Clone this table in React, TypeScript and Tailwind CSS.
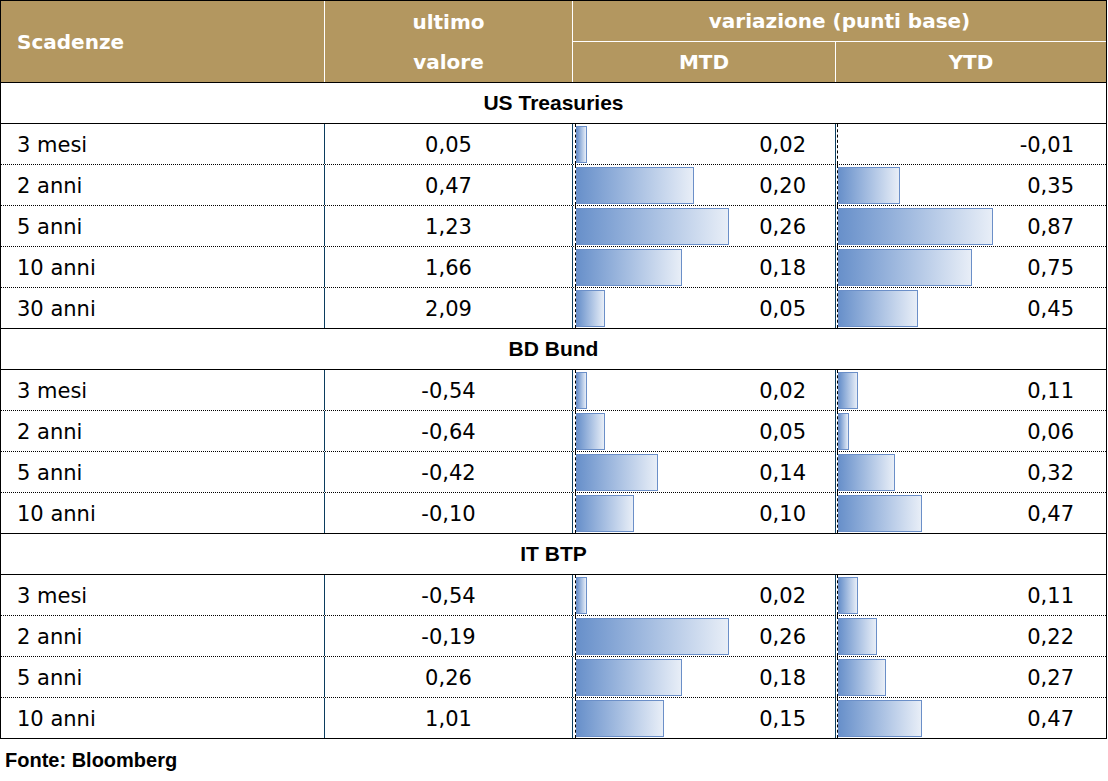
import React from "react";

type Row = { label: string; last: string; mtd: number; ytd: number };
type Section = { title: string; rows: Row[] };

const sections: Section[] = [
  {
    title: "US Treasuries",
    rows: [
      { label: "3 mesi", last: "0,05", mtd: 0.02, ytd: -0.01 },
      { label: "2 anni", last: "0,47", mtd: 0.2, ytd: 0.35 },
      { label: "5 anni", last: "1,23", mtd: 0.26, ytd: 0.87 },
      { label: "10 anni", last: "1,66", mtd: 0.18, ytd: 0.75 },
      { label: "30 anni", last: "2,09", mtd: 0.05, ytd: 0.45 },
    ],
  },
  {
    title: "BD Bund",
    rows: [
      { label: "3 mesi", last: "-0,54", mtd: 0.02, ytd: 0.11 },
      { label: "2 anni", last: "-0,64", mtd: 0.05, ytd: 0.06 },
      { label: "5 anni", last: "-0,42", mtd: 0.14, ytd: 0.32 },
      { label: "10 anni", last: "-0,10", mtd: 0.1, ytd: 0.47 },
    ],
  },
  {
    title: "IT BTP",
    rows: [
      { label: "3 mesi", last: "-0,54", mtd: 0.02, ytd: 0.11 },
      { label: "2 anni", last: "-0,19", mtd: 0.26, ytd: 0.22 },
      { label: "5 anni", last: "0,26", mtd: 0.18, ytd: 0.27 },
      { label: "10 anni", last: "1,01", mtd: 0.15, ytd: 0.47 },
    ],
  },
];

const fmt = (v: number) => v.toFixed(2).replace(".", ",");

function Bar({ width }: { width: number }) {
  if (width <= 0) return null;
  return (
    <div
      className="h-[37px] shrink-0 border border-[#6b8fc8] bg-linear-to-r from-[#6890ca] to-[#e8eef7]"
      style={{ width }}
    />
  );
}

function DataRow({ row, last }: { row: Row; last: boolean }) {
  return (
    <div
      className={
        "flex h-[41px] border-b border-black " +
        (last ? "border-solid" : "border-dotted")
      }
    >
      <div className="flex w-[324px] items-center border-r border-[#0b3d5e] pl-4">
        <span className="pt-[4px]">{row.label}</span>
      </div>
      <div className="flex w-[248px] items-center justify-center border-r border-[#0b3d5e]">
        <span className="pt-[4px]">{row.last}</span>
      </div>
      <div className="flex w-[263px] border-r border-[#0b3d5e] pl-[2px]">
        <div className="flex flex-1 items-center border-l border-dashed border-black pr-[29px]">
          <Bar width={Math.round(row.mtd * 594 - 1)} />
          <span className="ml-auto pt-[4px]">{fmt(row.mtd)}</span>
        </div>
      </div>
      <div className="flex flex-1 pl-[1px]">
        <div className="flex flex-1 items-center border-l border-dashed border-black pr-[32px]">
          <Bar width={Math.round(row.ytd * 178)} />
          <span className="ml-auto pt-[4px]">{fmt(row.ytd)}</span>
        </div>
      </div>
    </div>
  );
}

export default function App() {
  return (
    <div className="min-h-[781px] w-[1108px] bg-white">
      <div className="w-[1107px] border-x border-t border-black font-['DejaVu_Sans',sans-serif] text-[21px] text-black">
        <div className="flex h-[82px] border-b border-black bg-[#b39760] text-[20px] font-bold text-white">
          <div className="flex w-[324px] items-center border-r border-white pl-4">
            Scadenze
          </div>
          <div className="flex w-[248px] flex-col border-r border-white">
            <div className="flex h-[41px] items-center justify-center">ultimo</div>
            <div className="flex flex-1 items-center justify-center">valore</div>
          </div>
          <div className="flex flex-1 flex-col">
            <div className="flex h-[41px] items-center justify-center border-b border-white">
              variazione (punti base)
            </div>
            <div className="flex flex-1">
              <div className="flex w-[263px] items-center justify-center border-r border-white">
                MTD
              </div>
              <div className="flex flex-1 items-center justify-center">YTD</div>
            </div>
          </div>
        </div>

        {sections.map((s) => (
          <div key={s.title}>
            <div className="flex h-[41px] items-center justify-center border-b border-black font-['Liberation_Sans',sans-serif] text-[21px] font-bold">
              {s.title}
            </div>
            {s.rows.map((r, i) => (
              <DataRow key={r.label} row={r} last={i === s.rows.length - 1} />
            ))}
          </div>
        ))}
      </div>
      <p className="mt-[9px] pl-[5px] font-['Liberation_Sans',sans-serif] text-[20px] leading-6 font-bold text-black">
        Fonte: Bloomberg
      </p>
    </div>
  );
}
